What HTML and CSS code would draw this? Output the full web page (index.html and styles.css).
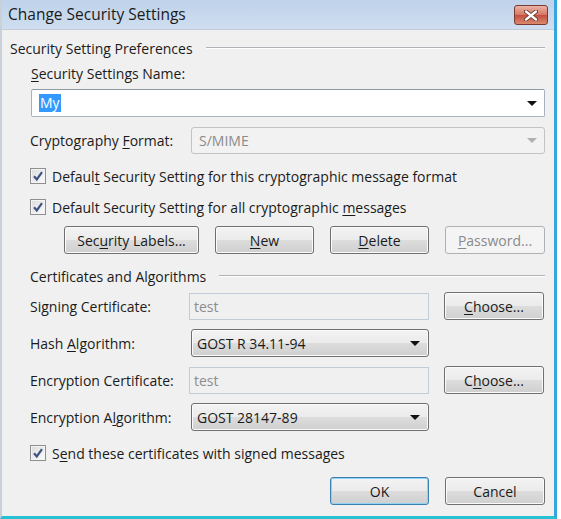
FILE: index.html
```html
<!DOCTYPE html>
<html lang="en">
<head>
  <meta charset="UTF-8">
  <title>Change Security Settings</title>
  <link rel="stylesheet" href="styles.css">
</head>
<body>
  <div class="window">
    <div class="titlebar">
      <span class="title">Change Security Settings</span>
      <span class="close">
        <svg width="14" height="11" viewBox="0 0 14 11">
          <path d="M2 1.5 L12 9.5 M12 1.5 L2 9.5" stroke="#5a2a24" stroke-width="4" stroke-linecap="round"/>
          <path d="M2 1.5 L12 9.5 M12 1.5 L2 9.5" stroke="#ffffff" stroke-width="2.4" stroke-linecap="round"/>
        </svg>
      </span>
    </div>

    <div class="content">
      <div class="group-head">Security Setting Preferences</div>

      <div class="field-label"><u>S</u>ecurity Settings Name:</div>
      <div class="combo edit name-combo">
        <span class="selected">My</span>
        <span class="arrow"></span>
      </div>

      <div class="crypto-row">
        <span class="crypto-label">Cryptography <u>F</u>ormat:</span>
        <div class="combo disabled">
          <span>S/MIME</span>
          <span class="arrow"></span>
        </div>
      </div>

      <div class="check check-first">
        <span class="box"><svg width="12" height="12" viewBox="0 0 12 12"><path d="M2 6.2 L4.8 9.5 L10 2.2" fill="none" stroke="#3f5384" stroke-width="2.2"/></svg></span>
        <span>Defaul<u>t</u> Security Setting for this cryptographic message format</span>
      </div>
      <div class="check check-second">
        <span class="box"><svg width="12" height="12" viewBox="0 0 12 12"><path d="M2 6.2 L4.8 9.5 L10 2.2" fill="none" stroke="#3f5384" stroke-width="2.2"/></svg></span>
        <span>Default Security Setting for all cryptographic <u>m</u>essages</span>
      </div>

      <div class="button-row">
        <button class="btn btn-labels">Sec<u>u</u>rity Labels...</button>
        <button class="btn btn-new"><u>N</u>ew</button>
        <button class="btn btn-delete"><u>D</u>elete</button>
        <button class="btn btn-password" disabled><u>P</u>assword...</button>
      </div>

      <div class="group-head indent">Certificates and Algorithms</div>

      <div class="cert-grid">
        <span>Signing Certificate:</span>
        <div class="textbox">test</div>
        <button class="btn"><u>C</u>hoose...</button>

        <span>Hash <u>A</u>lgorithm:</span>
        <div class="combo drop">
          <span>GOST R 34.11-94</span>
          <span class="arrow"></span>
        </div>
        <span></span>

        <span>Encryption Certificate:</span>
        <div class="textbox">test</div>
        <button class="btn">C<u>h</u>oose...</button>

        <span>Encryption A<u>l</u>gorithm:</span>
        <div class="combo drop">
          <span>GOST 28147-89</span>
          <span class="arrow"></span>
        </div>
        <span></span>
      </div>

      <div class="check check-send">
        <span class="box"><svg width="12" height="12" viewBox="0 0 12 12"><path d="M2 6.2 L4.8 9.5 L10 2.2" fill="none" stroke="#3f5384" stroke-width="2.2"/></svg></span>
        <span>S<u>e</u>nd these certificates with signed messages</span>
      </div>

      <div class="footer">
        <button class="btn btn-ok">OK</button>
        <button class="btn btn-cancel">Cancel</button>
      </div>
    </div>
  </div>
</body>
</html>
```

FILE: styles.css
```css
body {
  margin: 0;
  background: #ffffff;
  font-family: "Open Sans", "Noto Sans", sans-serif;
  font-size: 14px;
  color: #1b1b1b;
}

u {
  text-underline-offset: 2px;
}

.window {
  width: 557px;
  height: 519px;
  box-sizing: border-box;
  border-left: 2px solid #c9d0d8;
  border-right: 3px solid #36a5dd;
  border-bottom: 3px solid #27c1d4;
  background: #f0f0f0;
  display: flex;
  flex-direction: column;
}

.titlebar {
  height: 29px;
  flex: none;
  display: flex;
  justify-content: space-between;
  align-items: flex-start;
  padding: 0 6px;
  background: linear-gradient(#bfd2ea, #cfdef0);
  border-bottom: 1px solid #c3cdd8;
}

.title {
  font-size: 15.5px;
  line-height: 29px;
  color: #1a1a1a;
}

.close {
  margin-top: 5px;
  width: 34px;
  height: 20px;
  box-sizing: border-box;
  border: 1px solid #7a3a32;
  border-radius: 3px;
  background: linear-gradient(#eab3a6, #d67966 48%, #c4503f 52%, #d98a6e);
  display: flex;
  align-items: center;
  justify-content: center;
}

.content {
  flex: 1;
  padding: 8px 9px 0 8px;
}

.group-head {
  height: 20px;
  display: flex;
  align-items: center;
}

.group-head::after {
  content: "";
  flex: 1;
  margin-left: 13px;
  border-top: 1px solid #aeb2b6;
  border-bottom: 1px solid #ffffff;
}

.indent {
  margin-left: 20px;
  margin-top: 12px;
}

.field-label {
  height: 18px;
  line-height: 18px;
  margin: 7px 0 0 21px;
}

.combo {
  box-sizing: border-box;
  height: 28px;
  display: flex;
  align-items: center;
  justify-content: space-between;
  padding: 0 7px 0 7px;
}

.arrow {
  width: 0;
  height: 0;
  border-left: 5px solid transparent;
  border-right: 5px solid transparent;
  border-top: 5px solid #111111;
}

.edit {
  background: #ffffff;
  border: 1px solid #a9b3bf;
  border-top-color: #8e99a6;
  border-radius: 2px;
}

.name-combo {
  margin: 6px 0 0 21px;
}

.selected {
  background: #3399ff;
  color: #ffffff;
  padding: 0 1px;
  line-height: 18px;
}

.crypto-row {
  display: flex;
  align-items: center;
  height: 27px;
  margin: 10px 0 0 20px;
}

.crypto-label {
  width: 161px;
}

.disabled {
  flex: 1;
  height: 27px;
  background: #f2f2f2;
  border: 1px solid #c3c3c3;
  border-radius: 3px;
  color: #8a8a8a;
}

.disabled .arrow {
  border-top-color: #b0b0b0;
}

.check {
  display: flex;
  align-items: center;
  gap: 6px;
  height: 20px;
  margin-left: 20px;
}

.check-first {
  margin-top: 12px;
}

.check-second {
  margin-top: 11px;
}

.check-send {
  margin-top: 12px;
}

.box {
  width: 16px;
  height: 16px;
  box-sizing: border-box;
  border: 1px solid #8e8f8f;
  background: linear-gradient(135deg, #dcdcdc, #fbfbfb);
  box-shadow: inset 0 0 0 1px #f4f4f4;
  display: flex;
  align-items: center;
  justify-content: center;
}

.btn {
  box-sizing: border-box;
  height: 28px;
  padding: 0;
  font-family: inherit;
  font-size: 14px;
  color: #1b1b1b;
  border: 1px solid #707070;
  border-radius: 3px;
  background: linear-gradient(#f3f3f3 0, #ebebeb 50%, #dddddd 50%, #cfcfcf 100%);
  box-shadow: inset 0 0 0 1px #fbfbfb;
}

.btn:disabled {
  border-color: #adb2b5;
  background: #f4f4f4;
  color: #8a8a8a;
  box-shadow: none;
}

.button-row {
  display: flex;
  justify-content: flex-end;
  gap: 16px;
  margin-top: 9px;
}

.btn-labels {
  width: 135px;
}

.btn-new,
.btn-delete {
  width: 99px;
}

.btn-password {
  width: 100px;
}

.cert-grid {
  display: grid;
  grid-template-columns: 144px 240px 100px;
  grid-auto-rows: 28px;
  column-gap: 15px;
  row-gap: 9px;
  align-items: center;
  margin: 6px 0 0 20px;
}

.textbox {
  box-sizing: border-box;
  height: 27px;
  line-height: 25px;
  padding-left: 4px;
  background: #f0f0f0;
  border: 1px solid #c2ccd8;
  color: #8d8d8d;
}

.drop {
  margin-left: 2px;
  border: 1px solid #707070;
  border-radius: 3px;
  background: linear-gradient(#f3f3f3 0, #ebebeb 50%, #dddddd 50%, #cfcfcf 100%);
  box-shadow: inset 0 0 0 1px #fbfbfb;
  padding: 0 8px 0 5px;
}

.footer {
  display: flex;
  justify-content: flex-end;
  gap: 16px;
  margin-top: 14px;
}

.btn-ok {
  width: 99px;
  border-color: #3c7fb1;
  box-shadow: inset 0 0 0 1px #8fd4f2;
}

.btn-cancel {
  width: 100px;
}
```
